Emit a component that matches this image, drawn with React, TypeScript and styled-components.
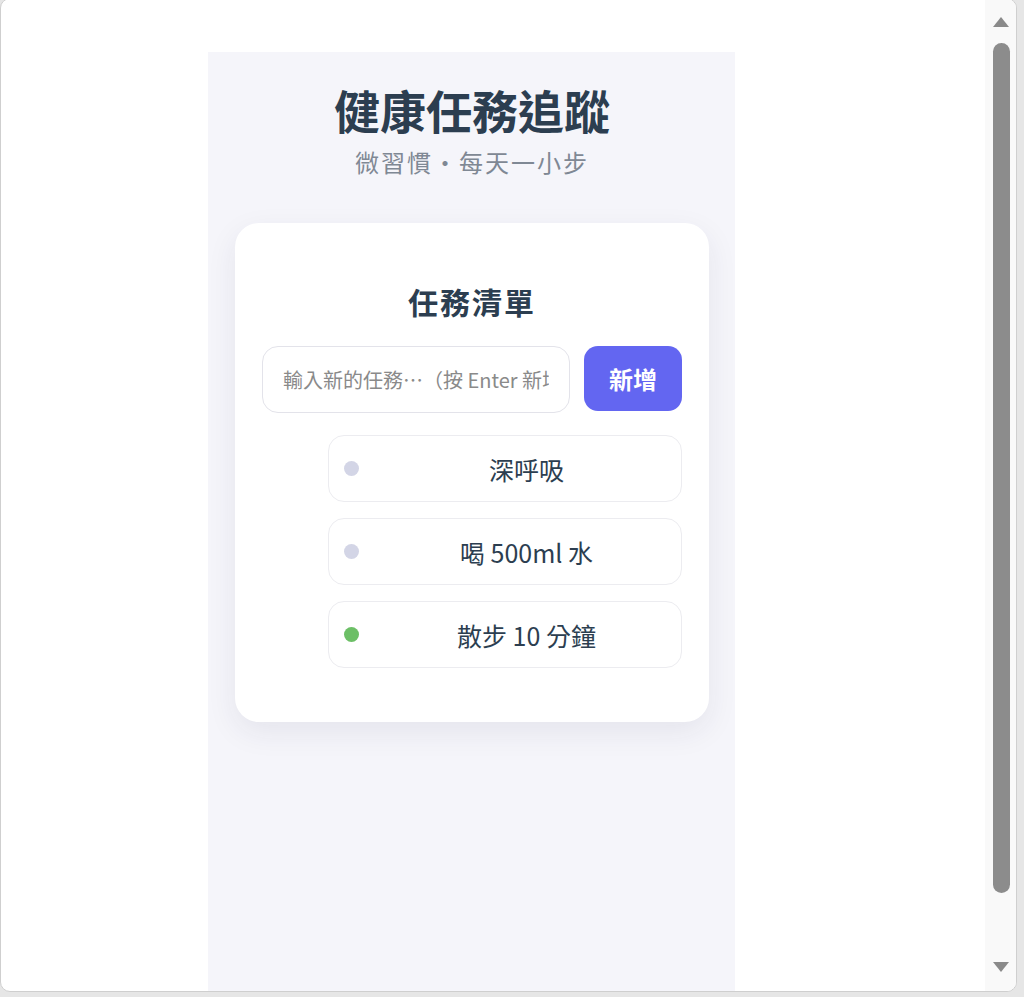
import React from "react";
import styled, { createGlobalStyle } from "styled-components";

const GlobalStyle = createGlobalStyle`
  html, body { margin: 0; padding: 0; }
  body {
    background: #e6e6e6;
    font-family: "Noto Sans CJK TC", "Noto Sans", sans-serif;
    overflow: hidden;
  }
`;

const Window = styled.div`
  box-sizing: border-box;
  width: 1017px;
  height: 994px;
  margin-top: -2px;
  border: 1px solid #cfcfcf;
  border-radius: 10px;
  background: #ffffff;
  display: flex;
  overflow: hidden;
`;

const Viewport = styled.div`
  flex: 1;
  display: flex;
  padding-top: 53px;
  padding-left: 207px;
`;

const Column = styled.main`
  box-sizing: border-box;
  width: 527px;
  background: #f5f5fa;
  padding: 0 26px 0 27px;
  display: flex;
  flex-direction: column;
  align-items: stretch;
`;

const Title = styled.h1`
  margin: 30px 0 0;
  text-align: center;
  font-size: 46px;
  line-height: 55px;
  font-weight: 700;
  color: #2c3e50;
`;

const Subtitle = styled.p`
  margin: 8px 0 0;
  text-align: center;
  font-size: 24px;
  letter-spacing: 2px;
  line-height: 34px;
  color: #7f8894;
`;

const Card = styled.section`
  box-sizing: border-box;
  margin-top: 44px;
  background: #ffffff;
  border-radius: 24px;
  padding: 58px 27px 54px;
  box-shadow: 0 10px 30px rgba(40, 40, 80, 0.08);
`;

const CardTitle = styled.h2`
  margin: 0;
  text-align: center;
  font-size: 30px;
  line-height: 40px;
  letter-spacing: 2px;
  font-weight: 700;
  color: #2c3e50;
`;

const InputRow = styled.div`
  margin-top: 25px;
  display: flex;
  align-items: flex-start;
  gap: 14px;
`;

const TaskInput = styled.input`
  box-sizing: border-box;
  flex: 1;
  min-width: 0;
  height: 67px;
  border: 1.5px solid #e3e3ea;
  border-radius: 16px;
  padding: 0 20px;
  font-family: inherit;
  font-size: 20px;
  color: #2c3e50;
  outline: none;
  &::placeholder { color: #8a8a8a; }
`;

const AddButton = styled.button`
  box-sizing: border-box;
  width: 98px;
  height: 65px;
  border: none;
  border-radius: 14px;
  background: #6366f1;
  color: #ffffff;
  font-family: inherit;
  font-size: 24px;
  font-weight: 700;
  cursor: pointer;
`;

const List = styled.ul`
  list-style: none;
  margin: 22px 0 0;
  padding: 0 0 0 66px;
  display: flex;
  flex-direction: column;
  gap: 16px;
`;

const Item = styled.li`
  box-sizing: border-box;
  height: 67px;
  border: 1px solid #ececf0;
  border-radius: 16px;
  background: #ffffff;
  padding: 0 15px;
  display: flex;
  align-items: center;
`;

const Dot = styled.span<{ $done?: boolean }>`
  flex: none;
  width: 15px;
  height: 15px;
  border-radius: 50%;
  background: ${(p) => (p.$done ? "#6cbf66" : "#d3d5e6")};
  margin-right: 28px;
`;

const ItemText = styled.span`
  flex: 1;
  text-align: center;
  font-size: 25px;
  color: #2c3e50;
`;

const Scrollbar = styled.div`
  flex: none;
  width: 31px;
  background: #f9f9f9;
  display: flex;
  flex-direction: column;
  align-items: center;
  padding-top: 18px;
  padding-bottom: 19px;
  box-sizing: border-box;
`;

const Arrow = styled.div<{ $down?: boolean }>`
  width: 0;
  height: 0;
  border-left: 8px solid transparent;
  border-right: 8px solid transparent;
  ${(p) =>
    p.$down
      ? "border-top: 10px solid #8a8a8a;"
      : "border-bottom: 10px solid #8a8a8a;"}
  margin-left: 1px;
`;

const Thumb = styled.div`
  width: 17px;
  height: 850px;
  margin: 16px 0 auto 1px;
  border-radius: 9px;
  background: #8c8c8c;
`;

const tasks = [
  { text: "深呼吸", done: false },
  { text: "喝 500ml 水", done: false },
  { text: "散步 10 分鐘", done: true },
];

export default function App() {
  return (
    <>
      <GlobalStyle />
      <Window>
        <Viewport>
          <Column>
            <Title>健康任務追蹤</Title>
            <Subtitle>微習慣・每天一小步</Subtitle>
            <Card>
              <CardTitle>任務清單</CardTitle>
              <InputRow>
                <TaskInput placeholder="輸入新的任務…（按 Enter 新增）" />
                <AddButton>新增</AddButton>
              </InputRow>
              <List>
                {tasks.map((t) => (
                  <Item key={t.text}>
                    <Dot $done={t.done} />
                    <ItemText>{t.text}</ItemText>
                  </Item>
                ))}
              </List>
            </Card>
          </Column>
        </Viewport>
        <Scrollbar>
          <Arrow />
          <Thumb />
          <Arrow $down />
        </Scrollbar>
      </Window>
    </>
  );
}
